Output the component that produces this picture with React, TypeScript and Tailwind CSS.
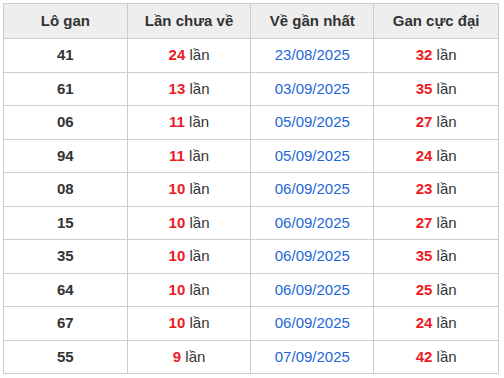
import React from "react";

const rows: [string, number, string, number][] = [
  ["41", 24, "23/08/2025", 32],
  ["61", 13, "03/09/2025", 35],
  ["06", 11, "05/09/2025", 27],
  ["94", 11, "05/09/2025", 24],
  ["08", 10, "06/09/2025", 23],
  ["15", 10, "06/09/2025", 27],
  ["35", 10, "06/09/2025", 35],
  ["64", 10, "06/09/2025", 25],
  ["67", 10, "06/09/2025", 24],
  ["55", 9, "07/09/2025", 42],
];

export default function App() {
  return (
    <div className="bg-white w-[504px] h-[378px] pt-[3px] pl-[3px]" style={{ fontFamily: '"Liberation Sans", Arial, sans-serif' }}>
      <table className="border-collapse w-[496px] text-[15px] text-[#333] text-center">
        <colgroup>
          <col className="w-[124px]" />
          <col className="w-[124px]" />
          <col className="w-[123px]" />
          <col className="w-[125px]" />
        </colgroup>
        <thead>
          <tr className="h-[35px] bg-[#eeeeee]">
            {["Lô gan", "Lần chưa về", "Về gần nhất", "Gan cực đại"].map((h) => (
              <th key={h} className="border border-[#cccccc] font-bold p-0">{h}</th>
            ))}
          </tr>
        </thead>
        <tbody>
          {rows.map(([lo, n, d, g], i) => (
            <tr key={i} className={i % 2 === 0 ? "h-[34px]" : "h-[33px]"}>
              <td className="border border-[#cccccc] font-bold p-0">{lo}</td>
              <td className="border border-[#cccccc] p-0">
                <span className="font-bold text-[#ee1b24]">{n}</span> lần
              </td>
              <td className="border border-[#cccccc] p-0 text-[#1c68d6]">{d}</td>
              <td className="border border-[#cccccc] p-0">
                <span className="font-bold text-[#ee1b24]">{g}</span> lần
              </td>
            </tr>
          ))}
        </tbody>
      </table>
    </div>
  );
}
